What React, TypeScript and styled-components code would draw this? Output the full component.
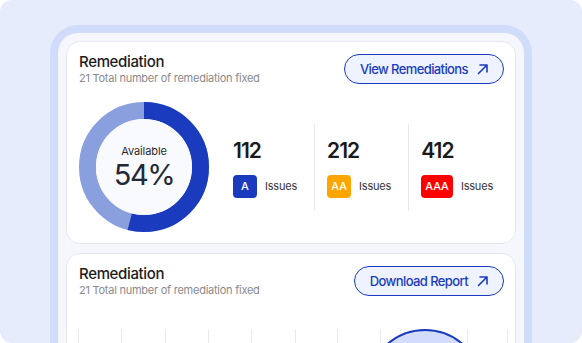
import React from "react";
import styled, { createGlobalStyle } from "styled-components";

// 데이터

interface Stat {
  value: number;
  level: string;
  color: string;
}

const stats: Stat[] = [
  { value: 112, level: "A", color: "#1a3bbd" },
  { value: 212, level: "AA", color: "#ffa500" },
  { value: 412, level: "AAA", color: "#ff0000" },
];

const available = 54;

const GlobalStyle = createGlobalStyle`
  html, body {
    margin: 0;
    padding: 0;
    background: #ffffff;
  }
  * {
    box-sizing: border-box;
  }
`;

const ArrowIcon: React.FC = () => (
  <svg width="12" height="12" viewBox="0 0 12 12" fill="none">
    <path
      d="M1.5 10.5 10 2M3 2h7v7"
      stroke="currentColor"
      strokeWidth="1.6"
      strokeLinecap="round"
      strokeLinejoin="round"
    />
  </svg>
);

const Donut: React.FC<{ percent: number }> = ({ percent }) => {
  const r = 56.5;
  const c = 2 * Math.PI * r;
  return (
    <DonutWrap>
      <svg width="130" height="130" viewBox="0 0 130 130">
        <circle cx="65" cy="65" r={r} fill="none" stroke="#8a9fde" strokeWidth="17" />
        <circle
          cx="65"
          cy="65"
          r={r}
          fill="none"
          stroke="#1a3bbd"
          strokeWidth="17"
          strokeDasharray={`${(c * percent) / 100} ${c}`}
          transform="rotate(-90 65 65)"
        />
        <circle cx="65" cy="65" r="48" fill="#f9fafd" />
      </svg>
      <DonutCenter>
        <DonutLabel>Available</DonutLabel>
        <DonutValue>{percent}%</DonutValue>
      </DonutCenter>
    </DonutWrap>
  );
};

const CardHeader: React.FC<{ action: string }> = ({ action }) => (
  <Header>
    <div>
      <Title>Remediation</Title>
      <Subtitle>21 Total number of remediation fixed</Subtitle>
    </div>
    <PillButton>
      {action}
      <ArrowIcon />
    </PillButton>
  </Header>
);

const gridLines = [0, 43, 87, 130, 173, 217, 259, 302, 345, 389, 429];

const App: React.FC = () => {
  return (
    <>
      <GlobalStyle />
      <Page>
        <Frame>
          <Card>
            <CardHeader action="View Remediations" />
            <Body>
              <Donut percent={available} />
              <StatsRow>
                {stats.map((s) => (
                  <StatCol key={s.level}>
                    <StatValue>{s.value}</StatValue>
                    <StatMeta>
                      <Badge $bg={s.color}>{s.level}</Badge>
                      <MetaText>Issues</MetaText>
                    </StatMeta>
                  </StatCol>
                ))}
              </StatsRow>
            </Body>
          </Card>

          <Card>
            <CardHeader action="Download Report" />
            <Chart>
              <svg width="431" height="120" viewBox="0 0 431 120">
                {gridLines.map((x) => (
                  <line key={x} x1={x + 0.5} y1="0" x2={x + 0.5} y2="120" stroke="#e9e9ee" strokeWidth="1" />
                ))}
                <circle cx="347" cy="58" r="57" fill="#d3dcfa" stroke="#1a3bbd" strokeWidth="2" />
              </svg>
            </Chart>
          </Card>
        </Frame>
      </Page>
    </>
  );
};

// Styled-components

const Page = styled.div`
  width: 582px;
  height: 343px;
  background: #e6ecfb;
  border-radius: 12px;
  overflow: hidden;
  padding-top: 25px;
  display: flex;
  justify-content: center;
  font-family: Inter, "Noto Sans", sans-serif;
  color: #1c1c1c;
`;

const Frame = styled.div`
  width: 482px;
  height: 400px;
  flex-shrink: 0;
  border: 8px solid #d1dbfa;
  border-bottom: none;
  border-radius: 28px 28px 0 0;
  background: #f5f7fd;
  padding: 8px;
  display: flex;
  flex-direction: column;
  gap: 9px;
`;

const Card = styled.div`
  background: #ffffff;
  border: 1px solid #e6e8ef;
  border-radius: 14px;
  padding: 13px 11px 11px 12px;
`;

const Header = styled.div`
  display: flex;
  justify-content: space-between;
  align-items: flex-start;
`;

const Title = styled.div`
  font-size: 15px;
  line-height: 14px;
  font-weight: 500;
  color: #1c1c1c;
  letter-spacing: -0.35px;
`;

const Subtitle = styled.div`
  margin-top: 1px;
  font-size: 11px;
  line-height: 16px;
  color: #8a8a8e;
  letter-spacing: -0.25px;
`;

const PillButton = styled.button`
  display: flex;
  align-items: center;
  gap: 9px;
  height: 30px;
  margin-top: -1px;
  padding: 0 14px 0 15px;
  border: 1px solid #1a3bbd;
  border-radius: 999px;
  background: #eef3ff;
  color: #1a3bbd;
  font-family: inherit;
  font-size: 13px;
  font-weight: 500;
  letter-spacing: -0.6px;
`;

const Body = styled.div`
  display: flex;
  align-items: center;
  margin-top: 16px;
`;

const DonutWrap = styled.div`
  position: relative;
  width: 130px;
  height: 130px;
  flex-shrink: 0;
  margin-right: 24px;

  svg {
    display: block;
  }
`;

const DonutCenter = styled.div`
  position: absolute;
  inset: 0;
  display: flex;
  flex-direction: column;
  align-items: center;
  justify-content: center;
  padding-top: 2px;
`;

const DonutLabel = styled.div`
  font-size: 11px;
  line-height: 14px;
  color: #2a2a2e;
  letter-spacing: -0.1px;
`;

const DonutValue = styled.div`
  font-size: 29px;
  line-height: 34px;
  font-weight: 400;
  color: #1f2937;
  letter-spacing: -1.4px;
`;

const StatsRow = styled.div`
  display: flex;
`;

const StatCol = styled.div`
  display: flex;
  flex-direction: column;
  gap: 12px;
  padding: 15px 17px 13px 12px;
  border-left: 1px solid #e7e8ec;

  &:first-child {
    padding-left: 0;
    border-left: none;
  }
`;

const StatValue = styled.div`
  font-size: 21px;
  line-height: 24px;
  font-weight: 600;
  color: #1a1a1a;
  letter-spacing: -1px;
`;

const StatMeta = styled.div`
  display: flex;
  align-items: center;
  gap: 8px;
`;

const Badge = styled.span<{ $bg: string }>`
  display: inline-flex;
  align-items: center;
  justify-content: center;
  min-width: 24px;
  height: 23px;
  padding: 0 4px;
  border-radius: 4px;
  background: ${(p) => p.$bg};
  color: #ffffff;
  font-size: 11px;
  font-weight: 500;
`;

const MetaText = styled.span`
  font-size: 11px;
  color: #333338;
  letter-spacing: -0.2px;
`;

const Chart = styled.div`
  margin: 31px 0 0 -1px;

  svg {
    display: block;
  }
`;

export default App;
